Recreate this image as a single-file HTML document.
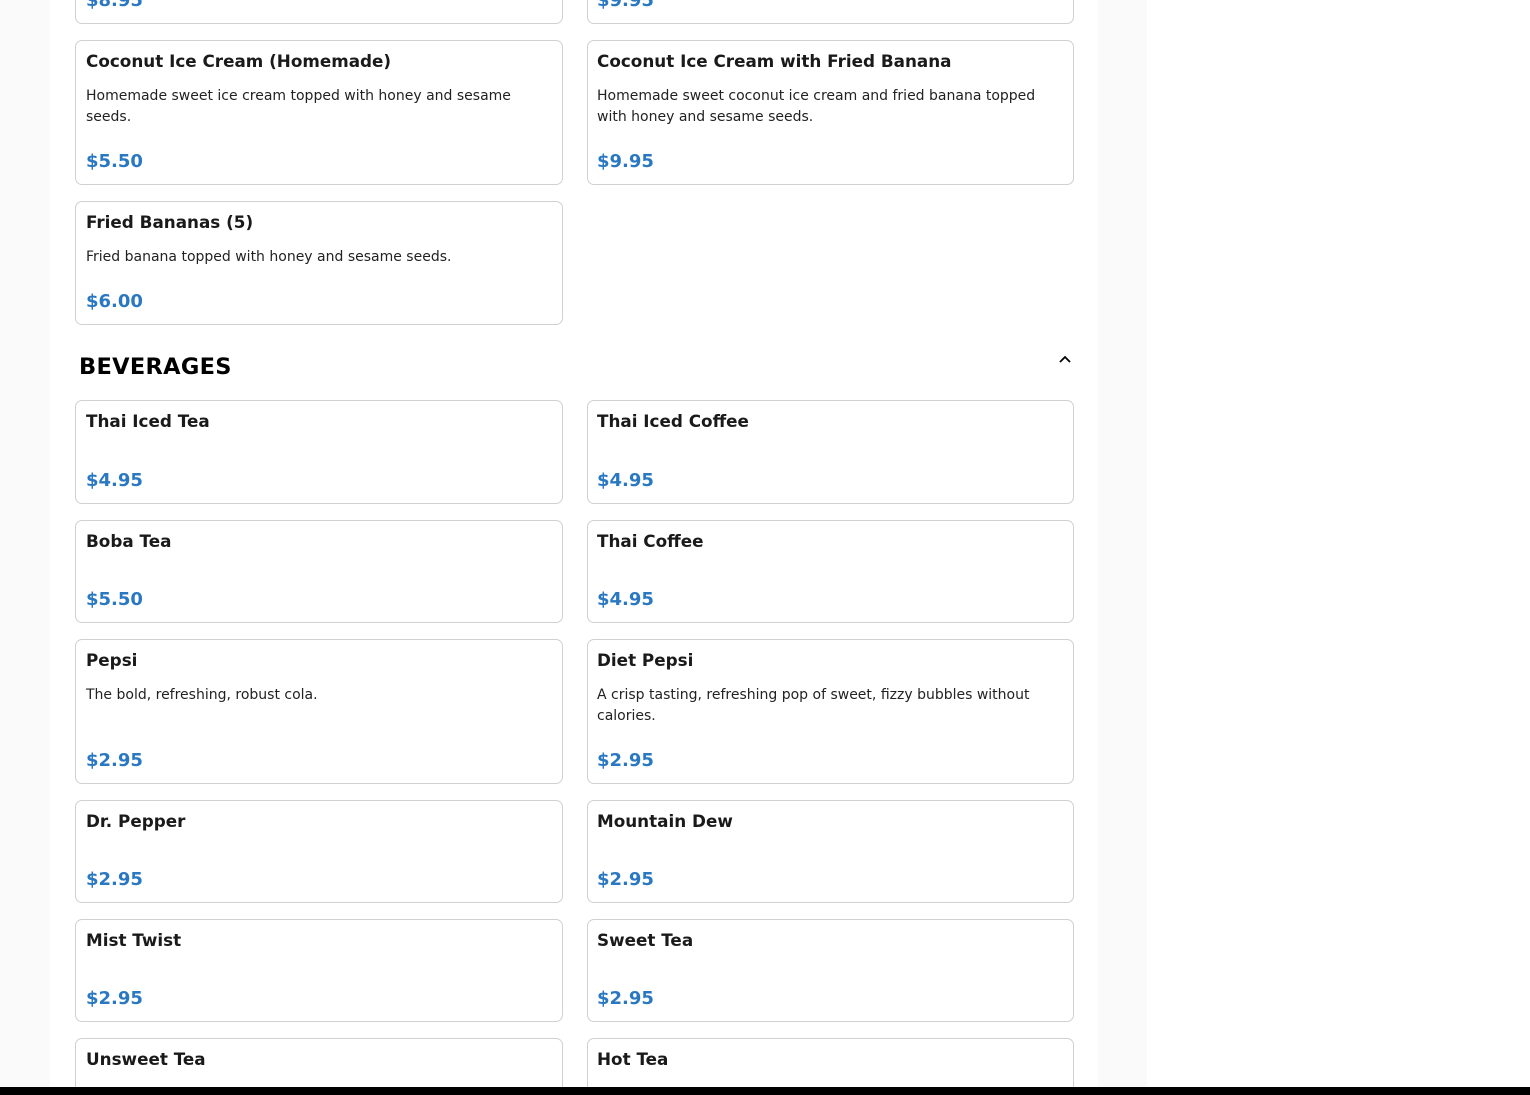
<!DOCTYPE html>
<html style="width:1530px;height:1095px;overflow:hidden"><head><meta charset="utf-8"><style>
*{margin:0;padding:0;box-sizing:border-box}
body{width:1530px;height:1095px;overflow:hidden;background:#fff;font-family:"DejaVu Sans","Liberation Sans",sans-serif;position:relative}
.g1{position:absolute;left:0;top:0;width:50px;height:1095px;background:#fafafa}
.g2{position:absolute;left:1098px;top:0;width:49px;height:1095px;background:#fafafa}
.bar{position:absolute;left:0;top:1087px;width:1530px;height:8px;background:#000;z-index:5}
.c{position:absolute;width:488px;border:1px solid #d0d0d0;border-radius:7px;background:#fff}
.c .t{position:absolute;left:10px;top:9px;font-size:16.8px;font-weight:bold;color:#1a1a1a;line-height:22px;white-space:nowrap}
.c .d{position:absolute;left:10px;top:45px;right:20px;font-size:14px;color:#222;line-height:21px}
.c .p{position:absolute;left:10px;bottom:10px;font-size:18px;font-weight:bold;color:#2a78c2;line-height:24px}
.L{left:75px}.R{left:587px;width:487px}.R .t,.R .d,.R .p{left:9px}
h2{position:absolute;left:79px;top:352px;font-size:22.5px;font-weight:bold;letter-spacing:0.3px;color:#000;line-height:30px}
</style></head><body>
<div class="g1"></div><div class="g2"></div>
<div class="c L" style="top:-60px;height:84px"><div class="p">$8.95</div></div>
<div class="c R" style="top:-60px;height:84px"><div class="p">$9.95</div></div>

<div class="c L" style="top:40px;height:145px"><div class="t">Coconut Ice Cream (Homemade)</div><div class="d">Homemade sweet ice cream topped with honey and sesame seeds.</div><div class="p">$5.50</div></div>
<div class="c R" style="top:40px;height:145px"><div class="t">Coconut Ice Cream with Fried Banana</div><div class="d">Homemade sweet coconut ice cream and fried banana topped with honey and sesame seeds.</div><div class="p">$9.95</div></div>
<div class="c L" style="top:201px;height:124px"><div class="t">Fried Bananas (5)</div><div class="d">Fried banana topped with honey and sesame seeds.</div><div class="p">$6.00</div></div>

<h2>BEVERAGES</h2>
<svg style="position:absolute;left:1058px;top:354px" width="14" height="10" viewBox="0 0 14 10"><path d="M2 8 L7 3 L12 8" fill="none" stroke="#000" stroke-width="1.8"/></svg>

<div class="c L" style="top:400px;height:104px"><div class="t">Thai Iced Tea</div><div class="p">$4.95</div></div>
<div class="c R" style="top:400px;height:104px"><div class="t">Thai Iced Coffee</div><div class="p">$4.95</div></div>
<div class="c L" style="top:520px;height:103px"><div class="t">Boba Tea</div><div class="p">$5.50</div></div>
<div class="c R" style="top:520px;height:103px"><div class="t">Thai Coffee</div><div class="p">$4.95</div></div>
<div class="c L" style="top:639px;height:145px"><div class="t">Pepsi</div><div class="d">The bold, refreshing, robust cola.</div><div class="p">$2.95</div></div>
<div class="c R" style="top:639px;height:145px"><div class="t">Diet Pepsi</div><div class="d">A crisp tasting, refreshing pop of sweet, fizzy bubbles without calories.</div><div class="p">$2.95</div></div>
<div class="c L" style="top:800px;height:103px"><div class="t">Dr. Pepper</div><div class="p">$2.95</div></div>
<div class="c R" style="top:800px;height:103px"><div class="t">Mountain Dew</div><div class="p">$2.95</div></div>
<div class="c L" style="top:919px;height:103px"><div class="t">Mist Twist</div><div class="p">$2.95</div></div>
<div class="c R" style="top:919px;height:103px"><div class="t">Sweet Tea</div><div class="p">$2.95</div></div>
<div class="c L" style="top:1038px;height:57px;border-bottom:none;border-radius:7px 7px 0 0"><div class="t">Unsweet Tea</div></div>
<div class="c R" style="top:1038px;height:57px;border-bottom:none;border-radius:7px 7px 0 0"><div class="t">Hot Tea</div></div>
<div class="bar"></div>
</body></html>
